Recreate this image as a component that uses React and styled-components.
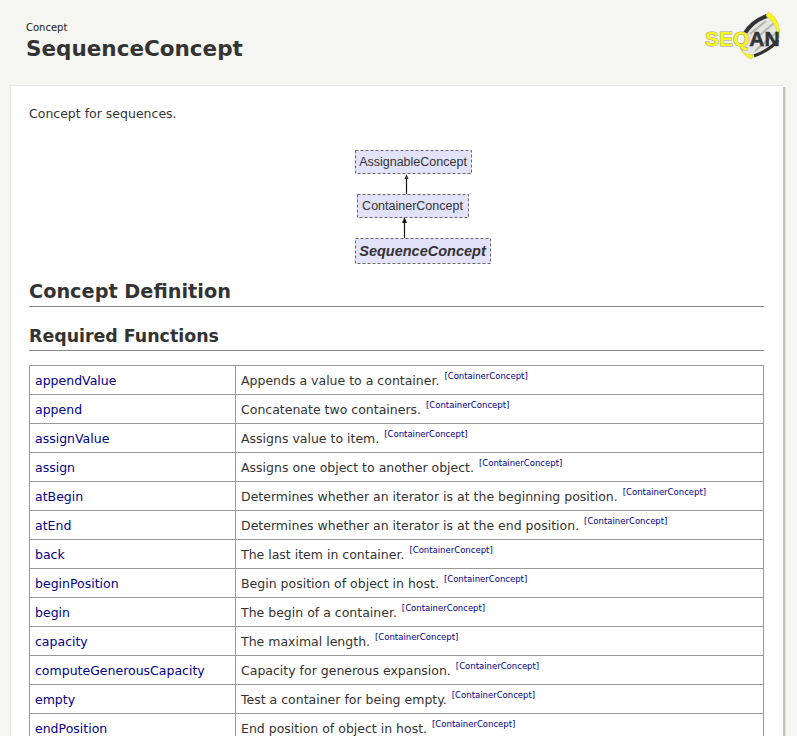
import React from "react";
import styled, { createGlobalStyle } from "styled-components";

const GlobalStyle = createGlobalStyle`
  html, body {
    margin: 0;
    padding: 0;
    height: 736px;
    overflow: hidden;
    background: #f5f5f1;
  }
  body {
    font-family: "DejaVu Sans", "Liberation Sans", sans-serif;
    color: #333;
  }
`;

const Page = styled.div`
  width: 797px;
  height: 736px;
  overflow: hidden;
`;

const Header = styled.header`
  height: 85px;
  padding: 10px 13px 0 26px;
  box-sizing: border-box;
  display: flex;
  justify-content: space-between;
  align-items: flex-start;
`;

const HeaderText = styled.div`
  padding-top: 11px;
`;

const Kind = styled.div`
  font-size: 10px;
  line-height: 14px;
  color: #222;
`;

const Title = styled.h1`
  margin: 0;
  font-size: 21.5px;
  line-height: 28px;
  font-weight: bold;
  color: #333;
`;

const Card = styled.main`
  margin: 0 14px 0 10px;
  padding: 19px 19px 0 18px;
  height: 700px;
  background: #fff;
  border-top: 1px solid #e9e9e6;
  border-left: 1px solid #e9e9e6;
  box-shadow: 2px 2px 0 #c9c1b0, 3px 2px 0 #e5e2da;
`;

const Intro = styled.p`
  margin: 0;
  font-size: 12.5px;
  line-height: 18px;
`;

const Diagram = styled.svg`
  display: block;
  margin: 26px 0 0 325px;
`;

const H2 = styled.h2`
  margin: 13px 0 0;
  font-size: 19.3px;
  line-height: 28px;
  font-weight: bold;
  border-bottom: 1px solid #888;
`;

const H3 = styled.h3`
  margin: 17px 0 14px;
  padding-bottom: 1px;
  font-size: 17.4px;
  line-height: 25px;
  font-weight: bold;
  border-bottom: 1px solid #888;
`;

const Table = styled.table`
  width: 735px;
  border-collapse: collapse;
  table-layout: fixed;
`;

const Cell = styled.td`
  height: 29px;
  padding: 0 5px;
  border: 1px solid #999;
  font-size: 12.5px;
  box-sizing: border-box;
  white-space: nowrap;
`;

const NameCell = styled(Cell)`
  width: 206px;
`;

const FuncLink = styled.a`
  color: #00008b;
  text-decoration: none;
`;

const Source = styled.sup`
  margin-left: 1px;
  font-size: 8.5px;
  color: #00008b;
  line-height: 0;
`;

const functions = [
  ["appendValue", "Appends a value to a container."],
  ["append", "Concatenate two containers."],
  ["assignValue", "Assigns value to item."],
  ["assign", "Assigns one object to another object."],
  ["atBegin", "Determines whether an iterator is at the beginning position."],
  ["atEnd", "Determines whether an iterator is at the end position."],
  ["back", "The last item in container."],
  ["beginPosition", "Begin position of object in host."],
  ["begin", "The begin of a container."],
  ["capacity", "The maximal length."],
  ["computeGenerousCapacity", "Capacity for generous expansion."],
  ["empty", "Test a container for being empty."],
  ["endPosition", "End position of object in host."],
];

function Logo() {
  return (
    <svg width="84" height="54" viewBox="0 0 84 54">
      {/* tilted oval with stripes */}
      <path d="M45 22 C50 14 58 8 68 6 L79 22 C76 32 66 42 52 47 L42 37 Z" fill="#e4e4e0" />
      <path d="M50 24 L66 11 M53 31 L74 13 M55 41 L78 21" stroke="#b4b4b0" strokeWidth="2" />
      <path d="M45 23 C50 15 58 9 67 6" fill="none" stroke="#333336" strokeWidth="4" />
      <path d="M54 46 C62 43 72 38 78 30" fill="none" stroke="#333336" strokeWidth="3" />
      {/* yellow arcs */}
      <path d="M68 2 C76 6 81 16 79 28 C77 18 73 10 66 6 Z" fill="#fbf61c" stroke="#b8b430" strokeWidth="0.4" />
      <path d="M40 37 C43 42 47 45 53 45 L52 49 C47 48 42 43 40 37 Z" fill="#fbf61c" stroke="#b8b430" strokeWidth="0.4" />
      <text x="5" y="36" fontFamily="Liberation Sans" fontWeight="bold" fontSize="21">
        <tspan fill="#fbf61c" stroke="#9c9c90" strokeWidth="1" paintOrder="stroke">SEQ</tspan>
        <tspan fill="#333336" stroke="#333336" strokeWidth="0.5">AN</tspan>
      </text>
    </svg>
  );
}

function ConceptBox({ x, y, w, h, label, bold }) {
  return (
    <g>
      <rect x={x + 0.5} y={y + 0.5} width={w} height={h} fill="#e2e2fb" stroke="#666" strokeDasharray="3 2" />
      <text
        x={x + w / 2}
        y={y + h / 2 + (bold ? 5.5 : 4.5)}
        textAnchor="middle"
        fontFamily="Liberation Sans"
        fontSize={bold ? 14.5 : 12.5}
        fontWeight={bold ? "bold" : "normal"}
        fontStyle={bold ? "italic" : "normal"}
        fill="#333"
      >
        {label}
      </text>
    </g>
  );
}

function InheritanceGraph() {
  return (
    <Diagram width="140" height="116" viewBox="0 0 140 116">
      <ConceptBox x={1} y={1} w={116} h={23} label="AssignableConcept" />
      <ConceptBox x={3} y={45} w={111} h={23} label="ContainerConcept" />
      <ConceptBox x={1} y={89} w={135} h={25} label="SequenceConcept" bold />
      <path d="M52.5 45V29" stroke="#111" strokeWidth="1.2" />
      <path d="M52.5 25l-2 5h4z" fill="#333" />
      <path d="M50.5 89V73" stroke="#111" strokeWidth="1.2" />
      <path d="M50.5 68l-2.5 6h5z" fill="#111" />
    </Diagram>
  );
}

export default function App() {
  return (
    <Page>
      <GlobalStyle />
      <Header>
        <HeaderText>
          <Kind>Concept</Kind>
          <Title>SequenceConcept</Title>
        </HeaderText>
        <Logo />
      </Header>
      <Card>
        <Intro>Concept for sequences.</Intro>
        <InheritanceGraph />
        <H2>Concept Definition</H2>
        <H3>Required Functions</H3>
        <Table>
          <tbody>
            {functions.map(([name, text]) => (
              <tr key={name}>
                <NameCell>
                  <FuncLink href="#">{name}</FuncLink>
                </NameCell>
                <Cell>
                  {text} <Source>[ContainerConcept]</Source>
                </Cell>
              </tr>
            ))}
          </tbody>
        </Table>
      </Card>
    </Page>
  );
}
